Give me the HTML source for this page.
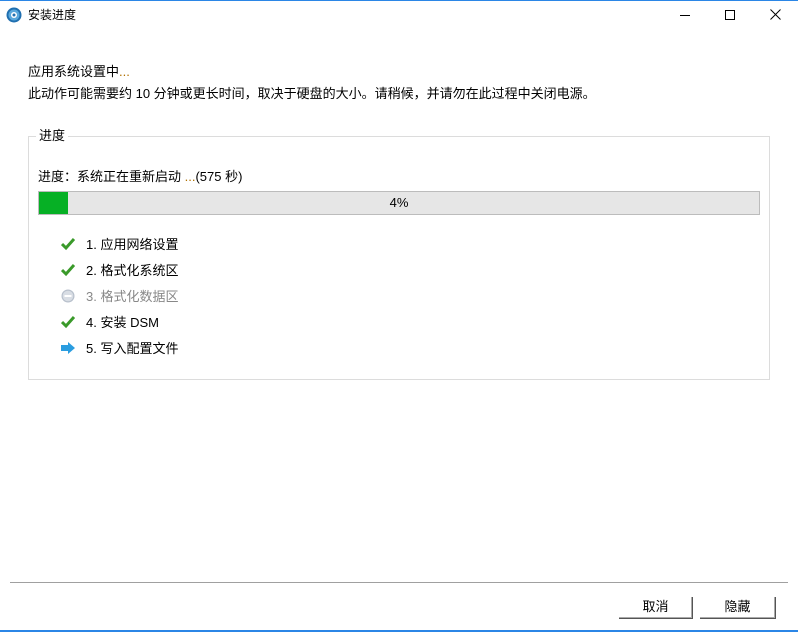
<!DOCTYPE html>
<html><head><meta charset="utf-8"><style>
body{margin:0;width:798px;height:632px;background:#fff;font-family:"Liberation Sans","Noto Sans CJK SC",sans-serif;font-size:13px;color:#000;position:relative;overflow:hidden}
.b{position:absolute;box-sizing:border-box}
.t{position:absolute;white-space:nowrap;line-height:15px}
.btn{position:absolute;box-sizing:border-box;background:#fff;border-right:1px solid #555;border-bottom:1px solid #555;box-shadow:inset -1px -1px 0 #aaa;text-align:center;font-size:13px;line-height:20px}
</style></head><body>
<div class="b" style="left:0;top:0;width:798px;height:1px;background:#2b86e6"></div>
<div class="b" style="left:0;top:630px;width:798px;height:2px;background:#2b86e6"></div>
<svg class="b" style="left:6px;top:7px" width="16" height="16" viewBox="0 0 16 16"><circle cx="8" cy="8" r="7.5" fill="#1f6fb0"/><circle cx="8" cy="8" r="5.5" fill="#5aa8dc"/><circle cx="8" cy="8" r="3" fill="#fff"/><circle cx="8" cy="8" r="1.5" fill="#1f6fb0"/></svg>
<div class="t" style="left:28px;top:8px;font-size:12px">安装进度</div>
<div class="b" style="left:680px;top:15px;width:10px;height:1px;background:#000"></div>
<div class="b" style="left:725px;top:10px;width:10px;height:10px;border:1px solid #000"></div>
<svg class="b" style="left:770px;top:9px" width="11" height="11"><path d="M0.5 0.5L10.5 10.5M10.5 0.5L0.5 10.5" stroke="#000" stroke-width="1"/></svg>
<div class="t" style="left:28px;top:64px">应用系统设置中<span style="color:#b07000">...</span></div>
<div class="t" style="left:28px;top:86px">此动作可能需要约 10 分钟或更长时间，取决于硬盘的大小。请稍候，并请勿在此过程中关闭电源。</div>
<div class="b" style="left:28px;top:136px;width:742px;height:244px;border:1px solid #dcdcdc"></div>
<div class="t" style="left:36px;top:128px;background:#fff;padding:0 3px">进度</div>
<div class="t" style="left:38px;top:169px">进度：系统正在重新启动 <span style="color:#b07000">...</span>(575 秒)</div>
<div class="b" style="left:38px;top:191px;width:722px;height:24px;background:#e6e6e6;border:1px solid #bcbcbc"></div>
<div class="b" style="left:39px;top:192px;width:29px;height:22px;background:#06b025"></div>
<div class="t" style="left:38px;top:195px;width:722px;text-align:center">4%</div>
<svg class="b" style="left:61px;top:237px" width="14" height="14"><path d="M1 7L5 11L13 2" stroke="#3a9a2a" stroke-width="3" fill="none"/></svg>
<div class="t" style="left:86px;top:237px">1. 应用网络设置</div>
<svg class="b" style="left:61px;top:263px" width="14" height="14"><path d="M1 7L5 11L13 2" stroke="#3a9a2a" stroke-width="3" fill="none"/></svg>
<div class="t" style="left:86px;top:263px">2. 格式化系统区</div>
<svg class="b" style="left:61px;top:289px" width="14" height="14"><circle cx="7" cy="7" r="6.5" fill="#b8c0cc"/><circle cx="7" cy="7" r="5.3" fill="#d8dde4"/><rect x="3.5" y="6" width="7" height="2" fill="#fff"/></svg>
<div class="t" style="left:86px;top:289px;color:#888">3. 格式化数据区</div>
<svg class="b" style="left:61px;top:315px" width="14" height="14"><path d="M1 7L5 11L13 2" stroke="#3a9a2a" stroke-width="3" fill="none"/></svg>
<div class="t" style="left:86px;top:315px">4. 安装 DSM</div>
<svg class="b" style="left:60px;top:341px" width="16" height="14"><path d="M1 4H8V1L15 7L8 13V10H1Z" fill="#2a9de0"/></svg>
<div class="t" style="left:86px;top:341px">5. 写入配置文件</div>
<div class="b" style="left:10px;top:582px;width:778px;height:1px;background:#a0a0a0"></div>
<div class="btn" style="left:619px;top:597px;width:74px;height:22px">取消</div>
<div class="btn" style="left:700px;top:597px;width:76px;height:22px">隐藏</div>
</body></html>
